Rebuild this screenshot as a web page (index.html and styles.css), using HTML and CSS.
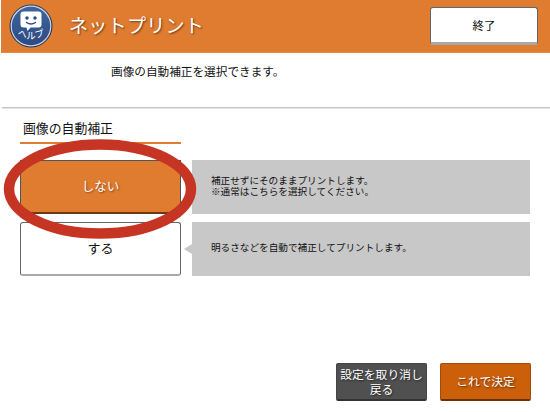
FILE: index.html
```html
<!DOCTYPE html>
<html lang="ja">
<head>
<meta charset="utf-8">
<title>ネットプリント</title>
<link rel="stylesheet" href="styles.css">
</head>
<body>
<div class="page">
  <header class="header">
    <svg class="help-icon" viewBox="0 0 44 44" width="44" height="44">
      <defs>
        <linearGradient id="hg" x1="0" y1="0" x2="0" y2="1">
          <stop offset="0" stop-color="#3f659f"/>
          <stop offset="1" stop-color="#2c4a80"/>
        </linearGradient>
      </defs>
      <circle cx="22" cy="22" r="21" fill="url(#hg)" stroke="#1d2f52" stroke-width="1"/>
      <circle cx="22" cy="22" r="19.800" fill="none" stroke="#c9d3e2" stroke-width="1.200"/>
      <path d="M14.500 7.500h15a3 3 0 0 1 3 3v10a3 3 0 0 1-3 3h-8l-3 3.500-1-3.500h-3a3 3 0 0 1-3-3v-10a3 3 0 0 1 3-3z" fill="#fff"/>
      <circle cx="18" cy="14" r="1.700" fill="#2c4a80"/>
      <circle cx="26" cy="14" r="1.700" fill="#2c4a80"/>
      <path d="M17.500 18.500q4.500 3 9 0" fill="none" stroke="#2c4a80" stroke-width="1.400" stroke-linecap="round"/>
      <path id="arc" d="M7 31Q22 38 37 31" fill="none"/>
      <text class="help-label"><textPath href="#arc" startOffset="50%" text-anchor="middle">ヘルプ</textPath></text>
    </svg>
    <h1 class="title">ネットプリント</h1>
    <button class="end-btn">終了</button>
  </header>
  <p class="lead">画像の自動補正を選択できます。</p>
  <hr class="rule">
  <h2 class="section-title">画像の自動補正</h2>
  <div class="options">
    <div class="option">
      <button class="choice choice-on">しない</button>
      <div class="desc">補正せずにそのままプリントします。<br>※通常はこちらを選択してください。</div>
    </div>
    <div class="option">
      <button class="choice">する</button>
      <div class="desc desc-arrow">明るさなどを自動で補正してプリントします。</div>
    </div>
    <svg class="mark" viewBox="0 0 200 104" width="200" height="104">
      <ellipse cx="100" cy="50" rx="91" ry="44.500" fill="none" stroke="#c63424" stroke-width="10.500"/>
    </svg>
  </div>
  <footer class="footer">
    <button class="act act-cancel">設定を取り消し<br>戻る</button>
    <button class="act act-ok">これで決定</button>
  </footer>
</div>
</body>
</html>
```
FILE: styles.css
```css
* { box-sizing: border-box; }
html, body { margin: 0; padding: 0; background: #fff; }
body { font-family: "Noto Sans CJK JP", "Liberation Sans", sans-serif; color: #111; }
.page { width: 550px; height: 412px; display: flex; flex-direction: column; overflow: hidden; }
.header {
  height: 53px; margin-left: 1px; background: #e07c30;
  display: flex; align-items: center; padding: 0 12px 0 8px;
  border-bottom: 1px solid #e68a45;
}
.help-icon { display: block; flex: none; }
.help-label { font-size: 9.500px; fill: #fff; }
.title {
  margin: 0 0 3px 16px; flex: 1; font-size: 19px; font-weight: 400; line-height: 26px;
  color: #fff; letter-spacing: 0.300px; text-shadow: 1px 1px 2px rgba(0,0,0,.55);
}
.end-btn {
  width: 108px; height: 38px; padding: 0; background: #fff; cursor: pointer;
  border: 1px solid #666; border-bottom: 3px solid #a8a8a8; border-radius: 3px;
  font: inherit; font-size: 11.500px; color: #111;
}
.lead { margin: 10px 0 0 111px; font-size: 11.650px; line-height: 16px; height: 44px; }
.rule { margin: 0 0 0 2px; border: 0; height: 1px; background: #c6c6c6; box-shadow: 0 1px 0 #e4e4e4; }
.section-title {
  margin: 12px 369px 0 20px; padding: 0 0 0 3px; height: 24px;
  font-size: 12.850px; font-weight: 400; line-height: 16px; color: #111;
  border-bottom: 2px solid #e07c30;
}
.options { position: relative; margin: 16px 20px 0; display: flex; flex-direction: column; gap: 8px; }
.option { display: flex; gap: 11px; height: 54px; }
.choice {
  width: 161px; padding: 0 0 2px; background: #fff; cursor: pointer;
  border: 1px solid #666; border-bottom: 2px solid #aaa; border-radius: 3px;
  font: inherit; font-size: 13px; color: #111;
}
.choice-on {
  background: #e07c30; color: #fff; font-size: 12.500px; border-color: #555; border-bottom-color: #6b3a12;
  text-shadow: 1px 1px 2px rgba(0,0,0,.45); border-radius: 0;
}
.desc {
  position: relative; width: 338px; background: #c8c8c8; padding: 0 0 2px 19px;
  display: flex; align-items: center; font-size: 9.650px; line-height: 11.500px; color: #111;
}
.desc-arrow::before {
  content: ""; position: absolute; left: -8px; top: 50%; margin-top: -5px;
  border-style: solid; border-width: 5px 8px 5px 0; border-color: transparent #c8c8c8 transparent transparent;
}
.mark { position: absolute; left: -20px; top: -21px; }
.footer { margin: 87px 19px 0 0; display: flex; justify-content: flex-end; gap: 13px; }
.act {
  width: 91px; height: 38px; padding: 0 0 2px; border-radius: 2px; cursor: pointer;
  font: inherit; font-size: 11.800px; line-height: 15px; color: #fff;
  text-shadow: 1px 1px 2px rgba(0,0,0,.6);
}
.act-cancel { background: #505050; border: 1px solid #444; border-bottom: 2px solid #333; }
.act-ok { background: #cb5f0a; border: 1px solid #a34c08; border-bottom: 2px solid #6a3206; }
```
